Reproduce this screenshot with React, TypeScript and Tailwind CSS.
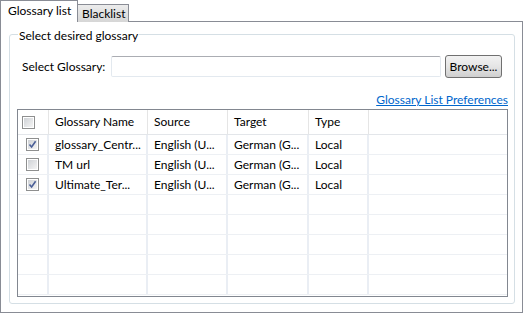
const rows = [
  { checked: true, name: "glossary_Centr...", source: "English (U...", target: "German (G...", type: "Local" },
  { checked: false, name: "TM url", source: "English (U...", target: "German (G...", type: "Local" },
  { checked: true, name: "Ultimate_Ter...", source: "English (U...", target: "German (G...", type: "Local" },
  null,
  null,
  null,
  null,
  null,
];

function Check({ checked }: { checked: boolean }) {
  return (
    <div className="w-[13px] h-[13px] border border-[#8e8f8f] bg-white p-[1px]">
      <div className="relative w-full h-full bg-gradient-to-br from-[#cfd2d6] to-[#f4f4f4]">
        {checked && (
          <svg className="absolute inset-0" width="9" height="9" viewBox="0 0 9 9">
            <path d="M1.5 4.5 L3.6 7 L7.6 1.2" fill="none" stroke="#4a5f97" strokeWidth="1.6" />
          </svg>
        )}
      </div>
    </div>
  );
}

export default function App() {
  return (
    <div className="w-[525px] h-[314px] bg-white text-[12px] leading-[16px] text-black font-['Lato',sans-serif]">
      <div className="flex items-end h-[22px]">
        <div className="relative z-10 w-[78px] h-[22px] border border-b-0 border-[#898c95] bg-white pl-[7px] pt-[2px]">
          Glossary list
        </div>
        <div className="w-[51px] h-[18px] border-t border-r border-[#898c95] bg-gradient-to-b from-[#ececec] to-[#d6d6d6] pl-[4px] pt-[1px]">
          Blacklist
        </div>
      </div>
      <div className="-mt-px w-[523px] h-[292px] border border-[#898c95] pt-[12px] pl-[8px] pr-[7px] pb-[8px]">
        <div className="relative h-full border border-[#d5dfe5] rounded-[3px] pl-[7px] pr-[6px] pt-[20px]">
          <span className="absolute left-[8px] top-[-7px] bg-white px-[1px]">Select desired glossary</span>
          <div className="flex items-center h-[23px] pl-[5px] pr-[6px]">
            <span className="w-[89px]">Select Glossary:</span>
            <div className="w-[330px] h-[21px] border border-[#e3e9ef] border-t-[#abadb3] rounded-[2px]" />
            <button className="ml-[4px] w-[57px] h-[23px] border border-[#707070] rounded-[3px] bg-gradient-to-b from-[#f2f2f2] via-[#e5e5e5] to-[#cfcfcf] text-center">
              Browse...
            </button>
          </div>
          <div className="mt-[14px] flex justify-end">
            <span className="text-[#0066cc] underline">Glossary List Preferences</span>
          </div>
          <div className="mt-px h-[188px] border border-[#828790] overflow-hidden">
            <div className="flex h-[25px] border-b border-[#e3e6ea]">
              <div className="w-[31px] border-r border-[#e5e5e5] pl-[4px] flex items-center">
                <Check checked={false} />
              </div>
              <div className="w-[99px] border-r border-[#e5e5e5] pl-[6px] flex items-center">Glossary Name</div>
              <div className="w-[80px] border-r border-[#e5e5e5] pl-[6px] flex items-center">Source</div>
              <div className="w-[81px] border-r border-[#e5e5e5] pl-[6px] flex items-center">Target</div>
              <div className="w-[60px] border-r border-[#e5e5e5] pl-[6px] flex items-center">Type</div>
              <div className="flex-1" />
            </div>
            {rows.map((r, i) => (
              <div key={i} className="flex h-[20px] border-b border-[#edf0f4]">
                <div className="w-[31px] border-r-2 border-[#eaeef4] pl-[8px] flex items-center">
                  {r && <Check checked={r.checked} />}
                </div>
                <div className="w-[99px] border-r-2 border-[#eaeef4] pl-[6px] flex items-center">{r?.name}</div>
                <div className="w-[80px] border-r-2 border-[#eaeef4] pl-[6px] flex items-center">{r?.source}</div>
                <div className="w-[81px] border-r-2 border-[#eaeef4] pl-[6px] flex items-center">{r?.target}</div>
                <div className="w-[60px] border-r-2 border-[#eaeef4] pl-[6px] flex items-center">{r?.type}</div>
                <div className="flex-1" />
              </div>
            ))}
          </div>
        </div>
      </div>
    </div>
  );
}
